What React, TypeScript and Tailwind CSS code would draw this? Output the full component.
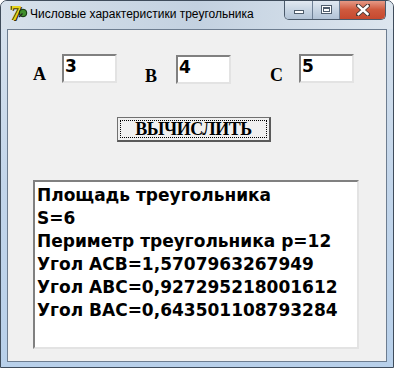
import React from "react";

function CaptionButtons() {
  return (
    <div className="flex self-start mr-[7px] -mt-px h-[20px] rounded-b-[5px] border border-t-0 border-[#4b5a6b] overflow-hidden">
      {/* Minimize */}
      <div className="w-[28px] h-full flex items-end justify-center pb-[5px] bg-linear-to-b from-[#e4ebf3] via-[#c9d6e4] to-[#b2c3d6] border-r border-[#6f8196]">
        <div className="w-[10px] h-[4px] bg-white border border-[#4f5d6c]" />
      </div>
      {/* Maximize */}
      <div className="w-[27px] h-full flex items-center justify-center bg-linear-to-b from-[#e4ebf3] via-[#c9d6e4] to-[#b2c3d6] border-r border-[#6f8196]">
        <div className="w-[11px] h-[9px] border border-[#4f5d6c] bg-white p-[1px]">
          <div className="w-full h-full border border-[#4f5d6c] border-t-2 bg-white" />
        </div>
      </div>
      {/* Close */}
      <div className="w-[45px] h-full flex items-center justify-center bg-linear-to-b from-[#e7a08e] via-[#cf5a3e] to-[#c6492f]">
        <svg width="14" height="12" viewBox="0 0 14 12">
          <path
            d="M2 1.5 L12 10.5 M12 1.5 L2 10.5"
            stroke="#4a3a36"
            strokeWidth="4.2"
            strokeLinecap="square"
          />
          <path
            d="M2.5 2 L11.5 10 M11.5 2 L2.5 10"
            stroke="#ffffff"
            strokeWidth="2.4"
            strokeLinecap="square"
          />
        </svg>
      </div>
    </div>
  );
}

function Edit({ value }: { value: string }) {
  return (
    <div className="w-[55px] h-[29px] bg-white border-2 border-t-[#808080] border-l-[#808080] border-r-[#e3e3e3] border-b-[#e3e3e3] pl-[1px] pt-[1px] text-[17px] leading-[18px] font-bold text-black font-['DejaVu_Sans',sans-serif]">
      {value}
    </div>
  );
}

const lines = [
  "Площадь треугольника",
  "S=6",
  "Периметр треугольника p=12",
  "Угол ACB=1,5707963267949",
  "Угол ABC=0,927295218001612",
  "Угол BAC=0,643501108793284",
];

export default function App() {
  return (
    <div className="w-[394px] h-[368px] flex flex-col border border-[#3f4c5b] rounded-t-[7px] bg-linear-to-b from-[#d9e3ed] via-[#c2d5ea] to-[#b8d0ea] overflow-hidden">
      {/* Title bar */}
      <div className="h-[28px] flex items-start bg-linear-to-r from-[#d7e1eb] via-[#c3d1e0] to-[#dde6ef]">
        <div className="w-[18px] h-[18px] ml-[6px] mt-[3px] relative flex items-center justify-center">
          <span className="font-['Liberation_Serif',serif] font-bold text-[22px] leading-none text-[#e6d31c] [text-shadow:1px_1px_0_#3a3000,-1px_0_0_#3a3000]">
            7
          </span>
          <svg className="absolute right-[-3px] top-[4px]" width="10" height="10" viewBox="0 0 10 10">
            <circle cx="5" cy="5" r="3.8" fill="#3f8f2c" stroke="#10300a" strokeWidth="1" />
            <path d="M1 9 L4.5 5.5" stroke="#222" strokeWidth="1.3" />
          </svg>
        </div>
        <div className="ml-[5px] mt-[6px] text-[12px] leading-[15px] text-black font-['Liberation_Sans',sans-serif]">
          Числовые характеристики треугольника
        </div>
        <div className="flex-1" />
        <CaptionButtons />
      </div>

      {/* Client area */}
      <div className="mx-[6px] h-[333px] border border-[#6d7d90] bg-[#f0f0f0] flex flex-col">
        {/* Inputs row */}
        <div className="flex items-start pt-[24px] pl-[25px] font-['Liberation_Serif',serif] font-bold text-[18px] leading-[18px] text-black">
          <div className="w-[29px] mt-[11px]">A</div>
          <Edit value="3" />
          <div className="w-[31px] ml-[28px] mt-[13px]">B</div>
          <div className="mt-[1px]">
            <Edit value="4" />
          </div>
          <div className="w-[29px] ml-[39px] mt-[12px]">C</div>
          <Edit value="5" />
        </div>

        {/* Button */}
        <div className="pl-[109px] mt-[32px]">
          <div className="w-[154px] h-[25px] border border-[#707070] border-r-2 border-b-2 border-r-[#5a5a5a] border-b-[#5a5a5a] bg-[#f0f0f0] p-[2px]">
            <div className="w-full h-full border border-dotted border-black flex items-center justify-center font-['Liberation_Serif',serif] font-bold text-[18px] leading-none tracking-[-0.5px] text-black">
              ВЫЧИСЛИТЬ
            </div>
          </div>
        </div>

        {/* Output */}
        <div className="pl-[25px] mt-[38px]">
          <div className="w-[326px] h-[169px] bg-white border-2 border-t-[#808080] border-l-[#808080] border-r-[#e3e3e3] border-b-[#e3e3e3] pl-[2px] pt-[2px] font-['DejaVu_Sans',sans-serif] font-bold text-[17px] leading-[23px] text-black">
            {lines.map((l) => (
              <div key={l} className="whitespace-nowrap">
                {l}
              </div>
            ))}
          </div>
        </div>
      </div>
    </div>
  );
}
